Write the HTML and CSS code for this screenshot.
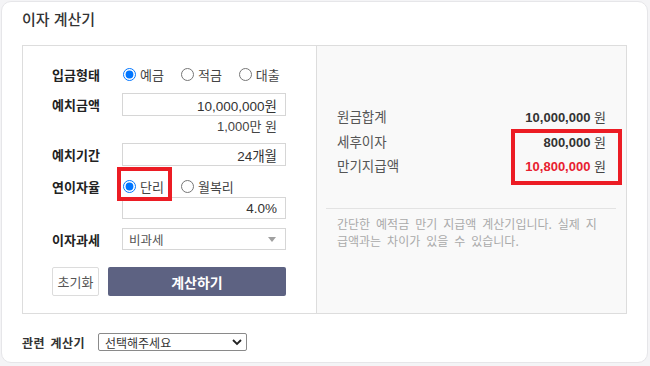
FILE: index.html
```html
<!DOCTYPE html>
<html lang="ko">
<head>
<meta charset="utf-8">
<title>이자 계산기</title>
<link rel="stylesheet" href="styles.css">
</head>
<body>
<div class="card">
  <h1 class="title">이자 계산기</h1>
  <div class="calc">
    <div class="form">
      <div class="row row-radio first">
        <span class="lbl">입금형태</span>
        <div class="radios">
          <label class="radio"><input type="radio" name="kind" checked><span>예금</span></label>
          <label class="radio"><input type="radio" name="kind"><span>적금</span></label>
          <label class="radio"><input type="radio" name="kind"><span>대출</span></label>
        </div>
      </div>
      <div class="row row-field gap7">
        <span class="lbl">예치금액</span>
        <input class="field" type="text" value="10,000,000원">
      </div>
      <div class="sub">1,000만 원</div>
      <div class="row row-field">
        <span class="lbl">예치기간</span>
        <input class="field" type="text" value="24개월">
      </div>
      <div class="row row-radio gap9">
        <span class="lbl">연이자율</span>
        <div class="radios">
          <label class="radio mark"><input type="radio" name="rate" checked><span>단리</span></label>
          <label class="radio"><input type="radio" name="rate"><span>월복리</span></label>
        </div>
      </div>
      <div class="row row-field short">
        <span class="lbl"></span>
        <input class="field" type="text" value="4.0%">
      </div>
      <div class="row row-field short gap9">
        <span class="lbl">이자과세</span>
        <div class="select"><span>비과세</span><i class="caret"></i></div>
      </div>
      <div class="btns">
        <button class="btn-reset" type="button">초기화</button>
        <button class="btn-submit" type="button">계산하기</button>
      </div>
    </div>
    <div class="result">
      <div class="res-row"><span class="res-lbl">원금합계</span><span class="res-val"><b>10,000,000</b> 원</span></div>
      <div class="res-row"><span class="res-lbl">세후이자</span><span class="res-val"><b>800,000</b> 원</span></div>
      <div class="res-row"><span class="res-lbl">만기지급액</span><span class="res-val"><b class="red">10,800,000</b> 원</span></div>
      <div class="divider"></div>
      <p class="note">간단한 예적금 만기 지급액 계산기입니다. 실제 지급액과는 차이가 있을 수 있습니다.</p>
      <div class="res-mark"></div>
    </div>
  </div>
  <div class="related">
    <span class="rel-lbl">관련 계산기</span>
    <div class="rel-select"><span>선택해주세요</span>
      <svg class="chev" width="10" height="7" viewBox="0 0 10 7"><polyline points="1,1 5,5 9,1" fill="none" stroke="#222" stroke-width="1.8"/></svg>
    </div>
  </div>
</div>
</body>
</html>
```

FILE: styles.css
```css
* { box-sizing: border-box; }
html, body { margin: 0; padding: 0; }
body {
  background: #f4f4f6;
  font-family: "Liberation Sans", "Noto Sans CJK KR", sans-serif;
  color: #333;
  width: 650px;
  height: 366px;
  overflow: hidden;
}
.card {
  margin: 1px 0 0 1px;
  width: 647px;
  height: 362px;
  background: #fff;
  border: 1px solid #e6e6e9;
  border-radius: 10px;
  padding: 0 20px;
}
.title {
  margin: 0;
  padding-top: 8px;
  height: 43px;
  font-size: 15px;
  line-height: 20px;
  font-weight: 500;
  color: #333;
}
.calc {
  display: flex;
  width: 605px;
  height: 269px;
  border: 1px solid #ddd;
}
.form {
  width: 294px;
  border-right: 1px solid #ddd;
  padding: 0 30px 0 29px;
  display: flex;
  flex-direction: column;
}
.row {
  display: flex;
  align-items: center;
}
.row.first { margin-top: 16px; height: 24px; }
.row-radio { height: 22px; }
.row.first.row-radio { height: 24px; }
.row-field { height: 23px; }
.row-field.short { height: 22px; }
.gap7 { margin-top: 7px; }
.gap9 { margin-top: 9px; }
.lbl {
  width: 70px;
  flex: none;
  font-size: 13px;
  font-weight: 700;
  color: #222;
}
.radios {
  display: flex;
  align-items: center;
  gap: 17px;
  margin-left: 1px;
}
.radio {
  position: relative;
  display: inline-flex;
  align-items: center;
  gap: 4px;
  font-size: 13px;
  color: #444;
  height: 22px;
}
.radio input {
  margin: 0;
  width: 13px;
  height: 13px;
}
.mark::after {
  content: "";
  position: absolute;
  left: -6px;
  right: -8px;
  top: -8px;
  bottom: -4px;
  border: 4px solid #ec1c24;
}
.field {
  flex: 1;
  min-width: 0;
  height: 100%;
  margin: 0;
  border: 1px solid #d6d6d6;
  border-radius: 0;
  padding: 0 8px;
  text-align: right;
  font-family: "Liberation Sans", "Noto Sans CJK KR", sans-serif;
  font-size: 13.5px;
  color: #333;
  background: #fff;
  outline: none;
}
.sub {
  height: 27px;
  line-height: 22px;
  text-align: right;
  padding-right: 9px;
  font-size: 13px;
  color: #444;
}
.select {
  flex: 1;
  height: 100%;
  border: 1px solid #d6d6d6;
  display: flex;
  align-items: center;
  justify-content: space-between;
  padding: 0 9px 0 6px;
  font-size: 12.5px;
  color: #555;
}
.caret {
  width: 0;
  height: 0;
  border-left: 4px solid transparent;
  border-right: 4px solid transparent;
  border-top: 5px solid #a0a0a0;
}
.btns {
  margin-top: 17px;
  height: 29px;
  display: flex;
  gap: 9px;
}
.btn-reset {
  width: 47px;
  height: 100%;
  margin: 0;
  padding: 0;
  background: #fff;
  border: 1px solid #dcdcdc;
  border-radius: 2px;
  font-family: "Noto Sans CJK KR", sans-serif;
  font-size: 13px;
  color: #555;
}
.btn-submit {
  flex: 1;
  height: 100%;
  margin: 0;
  padding: 0;
  background: #5d6282;
  border: none;
  border-radius: 2px;
  font-family: "Noto Sans CJK KR", sans-serif;
  font-size: 14px;
  font-weight: 700;
  color: #fff;
}
.result {
  position: relative;
  flex: 1;
  background: #f9f9f9;
  padding: 60px 20px 0;
}
.res-row {
  display: flex;
  justify-content: space-between;
  height: 24.5px;
  line-height: 24px;
  font-size: 13px;
}
.res-lbl {
  font-size: 13.5px;
  color: #555;
}
.res-val {
  color: #444;
  font-size: 13px;
}
.res-val b { color: #333; font-weight: 700; }
.res-val b.red { color: #e8202f; }
.divider {
  margin: 28px -10px 0 -11px;
  height: 1px;
  background: #e3e3e3;
}
.note {
  margin: 6px 0 0;
  font-size: 12px;
  line-height: 17px;
  color: #aaa;
  word-break: break-all;
  word-spacing: 2.6px;
  font-family: "Noto Sans CJK KR", sans-serif;
}
.res-mark {
  position: absolute;
  left: 194px;
  top: 83px;
  width: 111px;
  height: 56px;
  border: 4px solid #ec1c24;
}
.related {
  margin-top: 19px;
  display: flex;
  align-items: center;
  gap: 13px;
  height: 18px;
}
.rel-lbl {
  font-size: 12px;
  font-weight: 700;
  color: #333;
  word-spacing: 2px;
  letter-spacing: 0.4px;
}
.rel-select {
  width: 149px;
  height: 18px;
  border: 1px solid #8a8a8a;
  border-radius: 2px;
  display: flex;
  align-items: center;
  justify-content: space-between;
  padding: 0 4px 0 6px;
  font-size: 12px;
  color: #333;
}
.chev { display: block; }
```
